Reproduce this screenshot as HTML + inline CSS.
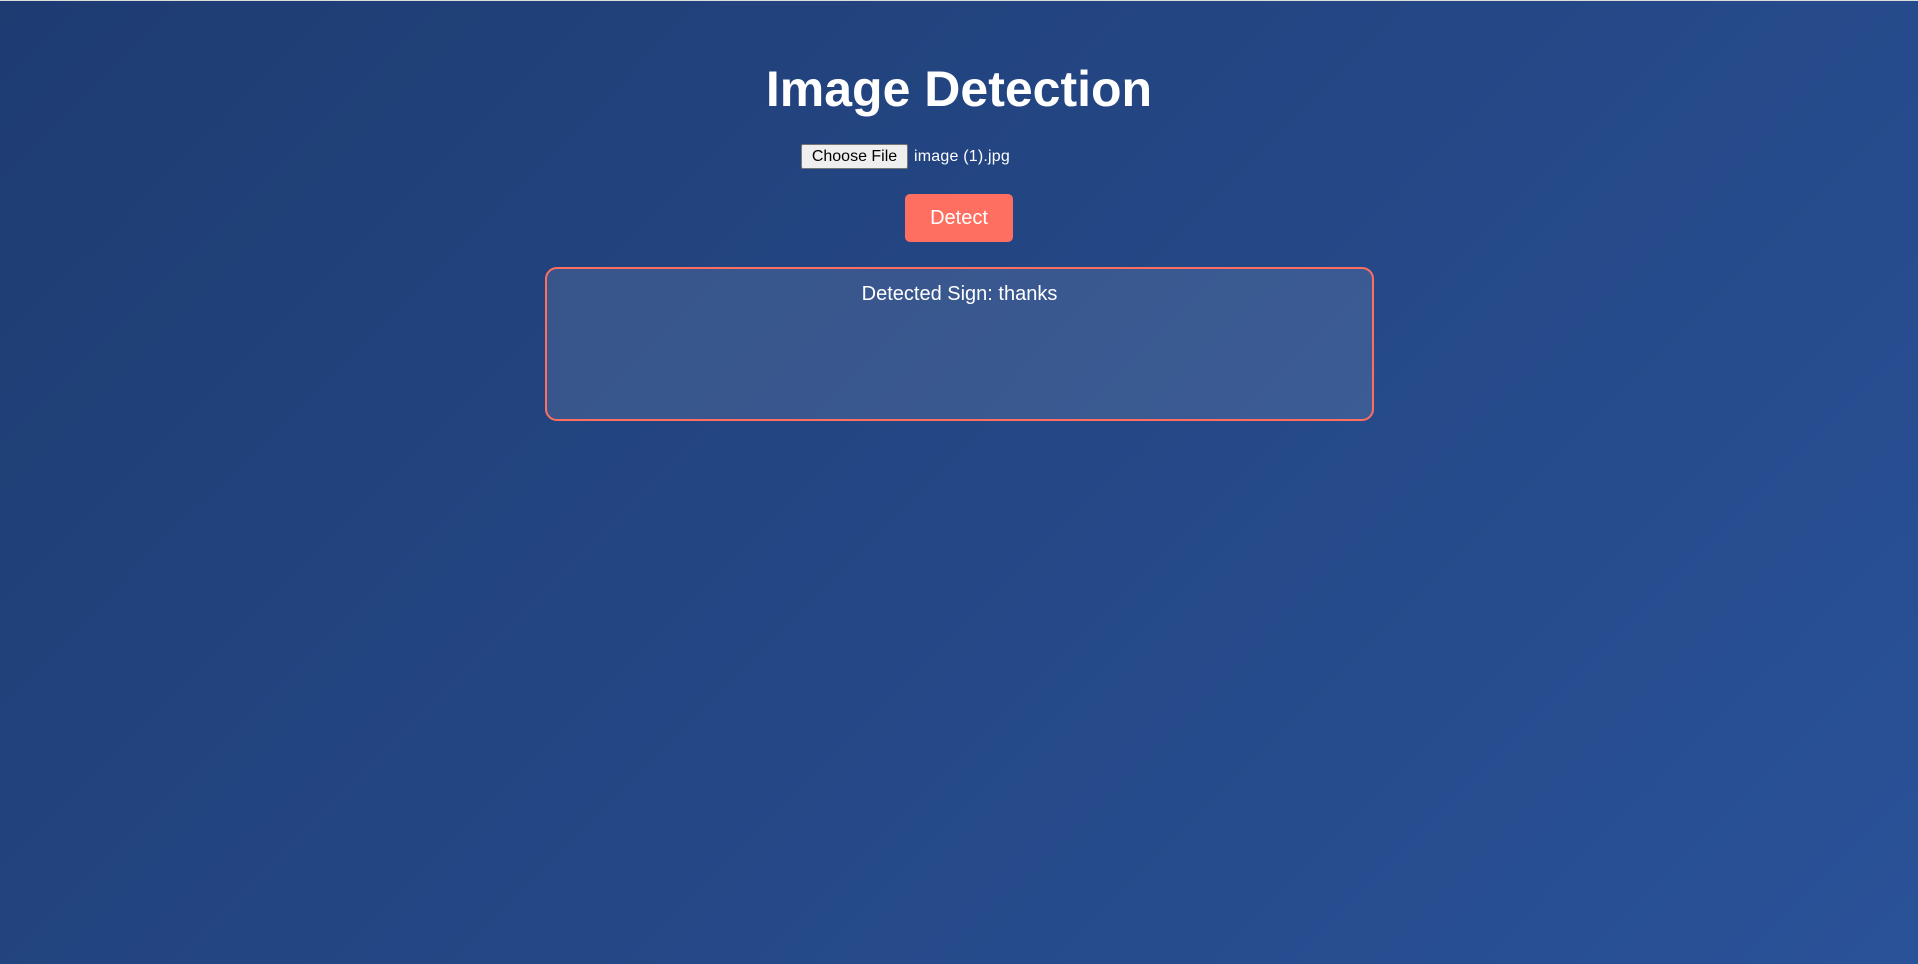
<!DOCTYPE html>
<html><head><meta charset="utf-8"><style>
html,body{margin:0;padding:0;width:1918px;height:964px;overflow:hidden}
body{background:linear-gradient(135deg,#1e3c72 0%,#2a5298 100%);border-top:1px solid #ddd;box-sizing:border-box;font-family:"Liberation Sans",Arial,sans-serif;color:#fff;position:relative}
h1{position:absolute;top:58px;left:0;width:1918px;text-align:center;margin:0;font-size:50px;font-weight:bold;line-height:60px}
.file{position:absolute;top:143px;left:801px;height:25px;display:flex;align-items:center;font-size:16px}
.file .b{box-sizing:border-box;height:25px;width:107px;background:#efefef;border:1px solid #767676;color:#000;border-radius:2px;display:flex;align-items:center;justify-content:center;font-size:16px}
.file span{margin-left:6px;letter-spacing:0.2px}
.detect{position:absolute;left:905px;top:193px;width:108px;height:48px;background:#ff6f61;border-radius:5px;display:flex;align-items:center;justify-content:center;font-size:20px}
.box{position:absolute;left:545px;top:266px;width:829px;height:154px;box-sizing:border-box;border:2px solid #ff6f61;border-radius:12px;background:rgba(255,255,255,0.1);text-align:center;font-size:20px;padding-top:14px}
</style></head><body>
<h1>Image Detection</h1>
<div class="file"><div class="b">Choose File</div><span>image (1).jpg</span></div>
<div class="detect">Detect</div>
<div class="box">Detected Sign: thanks</div>
</body></html>
